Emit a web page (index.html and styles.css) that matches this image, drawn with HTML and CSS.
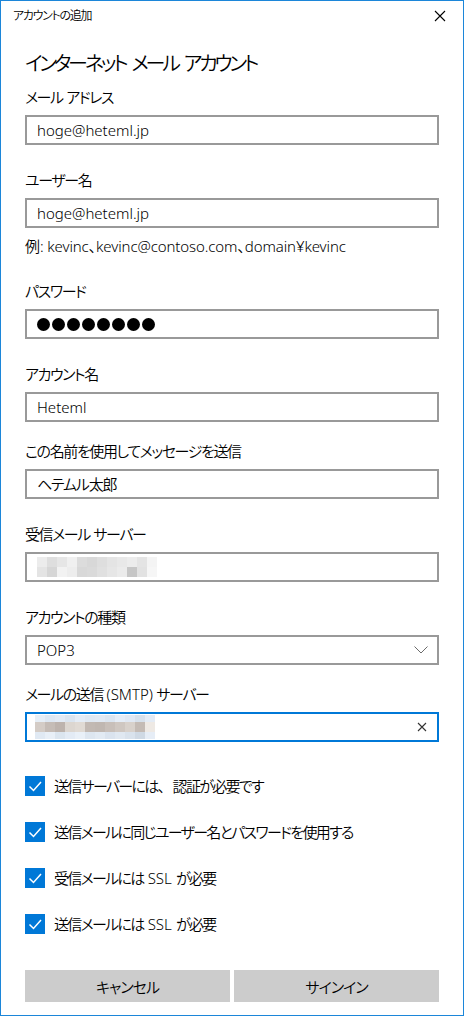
FILE: index.html
```html
<!DOCTYPE html>
<html lang="ja">
<head>
<meta charset="utf-8">
<link rel="stylesheet" href="styles.css">
</head>
<body>
<div class="window">
  <div class="titlebar">
    <span class="title">アカウントの追加</span>
    <svg class="close" width="12" height="12" viewBox="0 0 12 12"><path d="M1 1 L11 11 M11 1 L1 11" stroke="#000" stroke-width="1.1" fill="none"/></svg>
  </div>
  <div class="content">
    <h1 class="heading">インターネット メール アカウント</h1>

    <div class="field first">
      <div class="label">メール アドレス</div>
      <div class="input">hoge@heteml.jp</div>
    </div>

    <div class="field">
      <div class="label">ユーザー名</div>
      <div class="input">hoge@heteml.jp</div>
      <div class="hint">例: kevinc、kevinc@contoso.com、domain¥kevinc</div>
    </div>

    <div class="field">
      <div class="label">パスワード</div>
      <div class="input dots">
        <span class="dot"></span><span class="dot"></span><span class="dot"></span><span class="dot"></span><span class="dot"></span><span class="dot"></span><span class="dot"></span><span class="dot"></span>
      </div>
    </div>

    <div class="field">
      <div class="label">アカウント名</div>
      <div class="input">Heteml</div>
    </div>

    <div class="field tight">
      <div class="label">この名前を使用してメッセージを送信</div>
      <div class="input jp">ヘテムル太郎</div>
    </div>

    <div class="field">
      <div class="label">受信メール サーバー</div>
      <div class="input">
        <div class="mosaic">
          <div class="mrow"><i style="background:#ececec"></i><i style="background:#dedede"></i><i style="background:#e6e6e6"></i><i style="background:#f0f0f0"></i><i style="background:#dcdcdc"></i><i style="background:#d8d8d8"></i><i style="background:#dedede"></i><i style="background:#e4e4e4"></i><i style="background:#e8e8e8"></i><i style="background:#ececec"></i><i style="background:#e4e4e4"></i><i style="background:#f4f4f4"></i></div>
          <div class="mrow"><i style="background:#e4e4e4"></i><i style="background:#d6d6d6"></i><i style="background:#f2f2f2"></i><i style="background:#ededed"></i><i style="background:#d8d8d8"></i><i style="background:#dadada"></i><i style="background:#e0e0e0"></i><i style="background:#e6e6e6"></i><i style="background:#ebebeb"></i><i style="background:#c6c6c6"></i><i style="background:#e2e2e2"></i><i style="background:#f6f6f6"></i></div>
        </div>
      </div>
    </div>

    <div class="field">
      <div class="label">アカウントの種類</div>
      <div class="input select">
        <span>POP3</span>
        <svg class="chev" width="14" height="8" viewBox="0 0 14 8"><path d="M0.5 0.5 L7 7 L13.5 0.5" stroke="#6b6b6b" stroke-width="1" fill="none"/></svg>
      </div>
    </div>

    <div class="field tight">
      <div class="label">メールの送信 <span class="latin">(SMTP)</span> サーバー</div>
      <div class="input focused">
        <div class="mosaic smtp">
          <div class="mrow thin"><i style="background:#e6eef6"></i><i style="background:#dde7f2"></i><i style="background:#e2eaf4"></i><i style="background:#dae4ef"></i><i style="background:#e4ecf6"></i><i style="background:#dfe8f2"></i><i style="background:#e1e9f3"></i><i style="background:#dbe5f0"></i><i style="background:#e5edf7"></i><i style="background:#e0e8f3"></i><i style="background:#d6e0eb"></i><i style="background:#e3ebf5"></i></div>
          <div class="mrow"><i style="background:#d4ccc6"></i><i style="background:#c5bcb6"></i><i style="background:#bdb3ad"></i><i style="background:#dcd6d0"></i><i style="background:#e0dad4"></i><i style="background:#c2b9b3"></i><i style="background:#c0b7b1"></i><i style="background:#c8bfb9"></i><i style="background:#cfc7c1"></i><i style="background:#d8d1cb"></i><i style="background:#c4bbb5"></i><i style="background:#eee9e4"></i></div>
          <div class="mrow thin"><i style="background:#e0e9f3"></i><i style="background:#e8eff7"></i><i style="background:#dbe5ef"></i><i style="background:#e3ebf5"></i><i style="background:#e9f0f8"></i><i style="background:#dde6f0"></i><i style="background:#e2eaf3"></i><i style="background:#dae3ee"></i><i style="background:#e0e8f1"></i><i style="background:#d9e2ec"></i><i style="background:#cfd9e4"></i><i style="background:#e6edf6"></i></div>
        </div>
        <svg class="clear" width="10" height="10" viewBox="0 0 10 10"><path d="M1 1 L9 9 M9 1 L1 9" stroke="#333" stroke-width="1.1" fill="none"/></svg>
      </div>
    </div>

    <div class="checks">
      <div class="check"><span class="box"><svg width="20" height="20" viewBox="0 0 20 20"><path d="M4.5 10.5 L8.5 14.5 L16 6" stroke="#fff" stroke-width="1.5" fill="none"/></svg></span><span>送信サーバーには<span class="fw">、</span>認証が必要です</span></div>
      <div class="check"><span class="box"><svg width="20" height="20" viewBox="0 0 20 20"><path d="M4.5 10.5 L8.5 14.5 L16 6" stroke="#fff" stroke-width="1.5" fill="none"/></svg></span><span>送信メールに同じユーザー名とパスワードを使用する</span></div>
      <div class="check"><span class="box"><svg width="20" height="20" viewBox="0 0 20 20"><path d="M4.5 10.5 L8.5 14.5 L16 6" stroke="#fff" stroke-width="1.5" fill="none"/></svg></span><span>受信メールには <span class="latin">SSL</span> が必要</span></div>
      <div class="check"><span class="box"><svg width="20" height="20" viewBox="0 0 20 20"><path d="M4.5 10.5 L8.5 14.5 L16 6" stroke="#fff" stroke-width="1.5" fill="none"/></svg></span><span>送信メールには <span class="latin">SSL</span> が必要</span></div>
    </div>

    <div class="buttons">
      <div class="btn">キャンセル</div>
      <div class="btn">サインイン</div>
    </div>
  </div>
</div>
</body>
</html>
```
FILE: styles.css
```css
* { box-sizing: border-box; }
html, body { margin: 0; padding: 0; background: #fff; }
body {
  font-family: "Noto Sans", "Noto Sans CJK JP", sans-serif;
  font-feature-settings: "palt" 1;
  font-weight: 350;
  color: #000;
  width: 464px;
  height: 1016px;
  overflow: hidden;
}
.window {
  width: 464px;
  height: 1016px;
  border: 1px solid #1c86d9;
  display: flex;
  flex-direction: column;
}
.titlebar {
  height: 29px;
  display: flex;
  align-items: center;
  justify-content: space-between;
  padding: 0 17px 0 12px;
}
.title {
  font-size: 12px;
  line-height: 16px;
  letter-spacing: -1.3px;
}
.close { display: block; }
.content {
  padding: 20px 24px 0 24px;
  display: flex;
  flex-direction: column;
}
.heading {
  margin: 0;
  font-size: 20px;
  font-weight: 350;
  line-height: 28px;
  letter-spacing: -3.2px;
  word-spacing: 4px;
}
.field { margin-top: 25px; }
.field.first { margin-top: 9px; }
.field.tight { margin-top: 19px; }
.label {
  font-size: 15px;
  line-height: 20px;
  margin-bottom: 8px;
  letter-spacing: -1.4px;
  word-spacing: 1px;
}
.latin { letter-spacing: 0; }
.fw { font-feature-settings: normal; letter-spacing: 0; }
.input {
  height: 30px;
  border: 2px solid #999;
  padding: 0 10px;
  font-size: 15px;
  line-height: 26px;
  display: flex;
  align-items: center;
}
.input.jp { letter-spacing: -1.2px; }
.input.focused { border-color: #0078d7; padding-left: 8px; justify-content: space-between; padding-right: 10px; }
.input.select { justify-content: space-between; padding-right: 9px; }
.chev { display: block; }
.clear { display: block; }
.hint {
  font-size: 15px;
  line-height: 20px;
  margin-top: 8px;
  letter-spacing: -0.1px;
}
.dots { gap: 2px; }
.dot {
  width: 13px;
  height: 13px;
  border-radius: 50%;
  background: #000;
  display: block;
}
.mosaic { display: flex; flex-direction: column; }
.mrow { display: flex; height: 10px; }
.mrow i { display: block; width: 10px; height: 100%; }
.mrow.thin { height: 7px; }
.checks {
  margin-top: 34px;
  display: flex;
  flex-direction: column;
  gap: 26px;
}
.check {
  display: flex;
  align-items: center;
  gap: 9px;
  font-size: 15px;
  line-height: 20px;
  height: 20px;
  letter-spacing: -1.7px;
  word-spacing: 2px;
}
.box {
  width: 20px;
  height: 20px;
  background: #0078d7;
  display: block;
  flex: none;
}
.box svg { display: block; }
.buttons {
  margin-top: 36px;
  display: flex;
  gap: 4px;
}
.btn {
  flex: 1;
  height: 32px;
  background: #cccccc;
  font-size: 15px;
  display: flex;
  align-items: center;
  justify-content: center;
  letter-spacing: -1px;
}
```
